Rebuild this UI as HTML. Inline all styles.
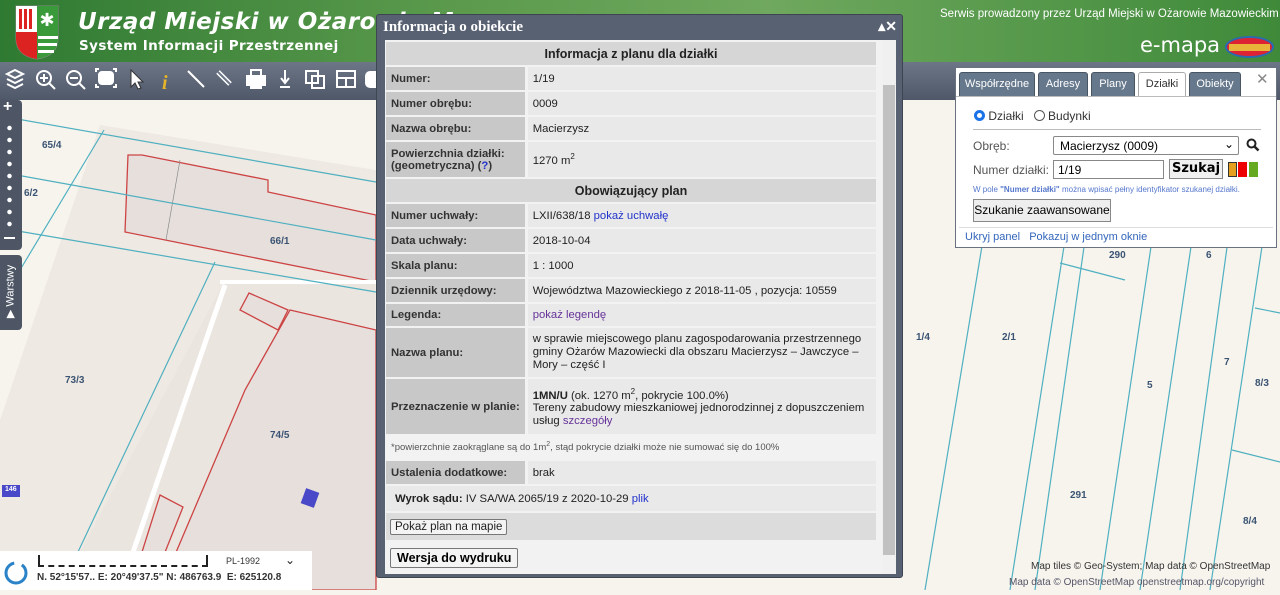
<!DOCTYPE html>
<html><head><meta charset="utf-8"><style>
*{box-sizing:border-box;margin:0;padding:0}
body{width:1280px;height:590px;overflow:hidden;position:relative;font-family:"Liberation Sans",sans-serif;background:#f7f4ee}
.hdr{position:absolute;left:0;top:0;width:1280px;height:62px;background:linear-gradient(90deg,#2f7a32 0%,#5b9a4d 35%,#6fa85e 60%,#3f8a3a 100%)}
.tb{position:absolute;left:0;top:62px;width:1280px;height:38px;background:linear-gradient(#6d7686,#4f5868)}
.map{position:absolute;left:0;top:100px;width:1280px;height:490px}
.lbl{position:absolute;font:bold 10px "Liberation Sans",sans-serif;color:#3b5473}
.dlg{position:absolute;left:376px;top:14px;width:527px;height:564px;background:#586172;border:1px solid #3d4452;border-radius:3px}
.dlg .ttl{position:absolute;left:6px;top:4px;color:#fff;font:bold 15px "Liberation Serif",serif}
.inner{position:absolute;left:8px;top:25px;width:511px;height:534px;background:#f2f2f2}
table{position:absolute;left:1px;top:0px;width:490px;border-collapse:separate;border-spacing:0 2px;font-size:11.3px;color:#222}
td{padding:0 5px;vertical-align:middle}
td.l{width:140px;background:#c8c8c8;font-weight:bold;color:#333;border-right:3px solid #f2f2f2;white-space:nowrap}
td.v{background:#e9e9e9}
td.h{background:#d6d6d6;text-align:center;font-weight:bold;font-size:12.5px}
a{color:#2233cc}
.sb{position:absolute;left:497px;top:0;width:14px;height:534px;background:#f0f0f0}
.sb div{position:absolute;left:1px;top:45px;width:12px;height:470px;background:#c1c1c1}
.btn{display:inline-block;border:1px solid #777;background:#f4f4f4;border-radius:2px;padding:1px 4px;font-size:12px}
.pn{position:absolute;left:955px;top:67px;width:322px;height:181px;background:#fff;border:1px solid #6a7282}
.tab{position:absolute;top:4px;height:24px;background:#66788c;color:#fff;font-size:11px;border:1px solid #4a5564;border-bottom:none;border-radius:3px 3px 0 0;text-align:center;line-height:23px}
.pn .t{position:absolute;font-size:12px;color:#333}
</style></head><body>
<div class="hdr">
 <svg style="position:absolute;left:14px;top:4px" width="46" height="56" viewBox="0 0 46 56"><path d="M2 2H44V34Q44 52 23 55Q2 52 2 34Z" fill="#fff" stroke="#888"/><path d="M2 2H23V28H2Z" fill="#fff"/><path d="M5 5h3v20h-3zM10 5h3v20h-3zM15 5h3v20h-3z" fill="#d22"/><path d="M2 28H23V55Q2 52 2 34Z" fill="#d22"/><path d="M23 28H44V34Q44 52 23 55Z" fill="#3a9a3a"/><path d="M24 32h20v3h-20zM24 39h19v3h-19zM24 46h16v3h-16z" fill="#fff"/><path d="M23 2H44V28H23Z" fill="#3a9a3a"/><text x="33" y="22" fill="#fff" font-size="18" text-anchor="middle">✱</text></svg>
 <div style="position:absolute;left:78px;top:9px;color:#fff;font:italic bold 23px 'DejaVu Sans',sans-serif;letter-spacing:.5px;white-space:nowrap">Urząd Miejski w Ożarowie M</div>
 <div style="position:absolute;left:79px;top:38px;color:#fff;font:bold 13.5px 'DejaVu Sans',sans-serif;letter-spacing:.4px">System Informacji Przestrzennej</div>
 <div style="position:absolute;left:940px;top:8px;color:#fff;font-size:11.5px;white-space:nowrap">Serwis prowadzony przez Urząd Miejski w Ożarowie Mazowieckim</div>
 <div style="position:absolute;left:1140px;top:33px;color:#fff;font:21px 'DejaVu Sans',sans-serif">e-mapa</div>
 <div style="position:absolute;left:1225px;top:36px;width:49px;height:22px;border-radius:50%;background:#d23;border:2px solid #2a6ab0"><div style="margin:6px 2px;height:7px;background:#e8b43a"></div></div>
</div>
<div class="tb">
 <svg width="380" height="38" viewBox="0 0 380 38" fill="none" stroke="#fff" stroke-width="2">
  <path d="M7 12l8-4 8 4-8 4z M7 17l8 4 8-4 M7 22l8 4 8-4"/>
  <circle cx="44" cy="16" r="7"/><path d="M49 21l6 6M40 16h8M44 12v8"/>
  <circle cx="74" cy="16" r="7"/><path d="M79 21l6 6M70 16h8"/>
  <path d="M96 10v-3h3M113 7h3v3M96 22v3h3M113 25h3v-3"/><rect x="99" y="10" width="14" height="12" rx="3" fill="#fff"/>
  <path d="M131 8l0 17 4-4 3 6 3-1-3-6 5 0z" fill="#fff" stroke="#333" stroke-width="1"/>
  <text x="162" y="27" fill="#e6b42a" stroke="none" font-size="20" font-style="italic" font-weight="bold" font-family="Liberation Serif">i</text>
  <path d="M188 9l16 16"/><path d="M218 10l12 12" stroke-width="5"/><path d="M218 10l12 12" stroke="#6d7686" stroke-width="2"/>
  <rect x="247" y="14" width="18" height="9" fill="#fff"/><rect x="251" y="8" width="10" height="6"/><rect x="251" y="20" width="10" height="6" fill="#fff"/>
  <path d="M285 8v12M281 16l4 5 4-5M280 25h10"/>
  <rect x="306" y="9" width="12" height="12"/><rect x="312" y="14" width="12" height="12"/>
  <rect x="337" y="9" width="18" height="16"/><path d="M337 16h18M346 16v9"/>
  <rect x="366" y="10" width="14" height="15" rx="4" fill="#fff"/>
 </svg>
</div>
<div class="map">
 <svg width="1280" height="490" viewBox="0 100 1280 490">
  <path d="M100 125L376 170L376 590L0 590L0 420Z" fill="#efe9e3"/>
  <path d="M128 155L142 155L268 180L268 192L376 215L376 282L125 232Z" fill="#e6dfdc" stroke="#c44" stroke-width="1.3"/>
  <path d="M180 160L166 240" stroke="#888" stroke-width=".7"/>
  <path d="M225 280L375 280L375 570L150 590L60 590Z" fill="#ebe5df"/>
  <path d="M220 282L376 282" stroke="#fff" stroke-width="4"/>
  <path d="M225 285L120 590" stroke="#fff" stroke-width="5"/>
  <path d="M290 310L376 330L376 590L160 590L245 390Z" fill="#e6dfdc" stroke="#c44" stroke-width="1.3"/>
  <path d="M249 293L288 310L278 330L240 310Z" fill="#e6dfdc" stroke="#c44" stroke-width="1.3"/>
  <path d="M160 495L183 507L150 590L130 590Z" fill="#e6dfdc" stroke="#c44" stroke-width="1.3"/>
  <g stroke="#4fb0c0" stroke-width="1.2" fill="none">
   <path d="M0 116L376 182M0 172L376 240M0 228L376 292M104 130L20 270M215 262L60 590"/>
   <path d="M983 240L925 590M1065 240L1010 590M1085 240L1035 590M1152 240L1100 590M1192 240L1140 590M1228 240L1180 590M1263 240L1210 590"/>
   <path d="M1060 263L1125 280M1255 308L1280 313M1232 450L1280 462"/>
  </g>
  <rect x="303" y="490" width="14" height="16" fill="#4848c8" transform="rotate(20 310 498)"/>
  <rect x="2" y="485" width="18" height="12" fill="#4848c8"/>
 </svg>
 <div class="lbl" style="left:42px;top:40px">65/4</div><div class="lbl" style="left:24px;top:88px">6/2</div>
 <div class="lbl" style="left:270px;top:136px">66/1</div><div class="lbl" style="left:65px;top:275px">73/3</div>
 <div class="lbl" style="left:270px;top:330px">74/5</div><div class="lbl" style="left:5px;top:386px;color:#fff;font-size:7px">146</div>
 <div class="lbl" style="left:916px;top:232px">1/4</div><div class="lbl" style="left:1002px;top:232px">2/1</div>
 <div class="lbl" style="left:1109px;top:150px">290</div><div class="lbl" style="left:1206px;top:150px">6</div>
 <div class="lbl" style="left:1147px;top:280px">5</div><div class="lbl" style="left:1224px;top:257px">7</div>
 <div class="lbl" style="left:1255px;top:278px">8/3</div><div class="lbl" style="left:1070px;top:390px">291</div>
 <div class="lbl" style="left:1243px;top:416px">8/4</div>
 <div style="position:absolute;left:1031px;top:461px;font-size:10px;color:#333;white-space:nowrap">Map tiles © Geo-System; Map data © OpenStreetMap</div>
 <div style="position:absolute;left:1009px;top:477px;font-size:10px;color:#556;white-space:nowrap">Map data © OpenStreetMap openstreetmap.org/copyright</div>
 <div style="position:absolute;left:0;top:451px;width:312px;height:39px;background:#fff"></div>
 <svg style="position:absolute;left:3px;top:460px" width="26" height="26"><circle cx="13" cy="13" r="10" fill="none" stroke="#2a82c8" stroke-width="3" stroke-dasharray="45 8"/></svg>
 <div style="position:absolute;left:38px;top:455px;width:170px;height:12px;border-left:2px solid #222;border-right:2px solid #222;border-bottom:2px dashed #222"></div>
 <div style="position:absolute;left:226px;top:456px;font-size:9px;color:#333">PL-1992</div>
 <div style="position:absolute;left:285px;top:453px;font-size:12px;color:#222">⌄</div>
 <div style="position:absolute;left:37px;top:472px;font:bold 10px 'Liberation Sans';color:#333;white-space:nowrap">N. 52°15'57.. E: 20°49'37.5" N: 486763.9 &nbsp;E: 625120.8</div>
 <div style="position:absolute;left:0;top:0;width:22px;height:150px;background:#4e5666;border-radius:0 4px 4px 0"></div>
 <div style="position:absolute;left:3px;top:-2px;color:#fff;font:bold 16px sans-serif">+</div>
 <div style="position:absolute;left:7px;top:22px;width:5px;height:110px;background:radial-gradient(circle,#fff 2px,transparent 2.5px) 0 0/5px 12px"></div>
 <div style="position:absolute;left:4px;top:137px;width:11px;height:2px;background:#fff"></div>
 <div style="position:absolute;left:0;top:155px;width:22px;height:75px;background:#4e5666;border-radius:0 4px 4px 0"></div>
 <div style="position:absolute;left:-20px;top:185px;transform:rotate(-90deg);color:#fff;font-size:11px;width:60px;text-align:center">▶ Warstwy</div>
</div>
<div class="dlg">
 <div class="ttl">Informacja o obiekcie</div>
 <div style="position:absolute;right:5px;top:3px;color:#fff;font:bold 14px sans-serif">▴✕</div>
 <div class="inner">
  <table>
   <tr style="height:23px"><td class="h" colspan="2">Informacja z planu dla działki</td></tr>
   <tr style="height:23px"><td class="l">Numer:</td><td class="v">1/19</td></tr>
   <tr style="height:23px"><td class="l">Numer obrębu:</td><td class="v">0009</td></tr>
   <tr style="height:23px"><td class="l">Nazwa obrębu:</td><td class="v">Macierzysz</td></tr>
   <tr style="height:35px"><td class="l">Powierzchnia działki:<br>(geometryczna) (<a>?</a>)</td><td class="v">1270 m<sup style="font-size:8px">2</sup></td></tr>
   <tr style="height:23px"><td class="h" colspan="2">Obowiązujący plan</td></tr>
   <tr style="height:23px"><td class="l">Numer uchwały:</td><td class="v">LXII/638/18 <a>pokaż uchwałę</a></td></tr>
   <tr style="height:23px"><td class="l">Data uchwały:</td><td class="v">2018-10-04</td></tr>
   <tr style="height:23px"><td class="l">Skala planu:</td><td class="v">1 : 1000</td></tr>
   <tr style="height:23px"><td class="l">Dziennik urzędowy:</td><td class="v">Województwa Mazowieckiego z 2018-11-05 , pozycja: 10559</td></tr>
   <tr style="height:22px"><td class="l">Legenda:</td><td class="v"><a style="color:#639">pokaż legendę</a></td></tr>
   <tr style="height:49px"><td class="l">Nazwa planu:</td><td class="v" style="line-height:13px">w sprawie miejscowego planu zagospodarowania przestrzennego gminy Ożarów Mazowiecki dla obszaru Macierzysz – Jawczyce – Mory – część I</td></tr>
   <tr style="height:55px"><td class="l">Przeznaczenie w planie:</td><td class="v" style="line-height:13px"><b>1MN/U</b> (ok. 1270 m<sup style="font-size:8px">2</sup>, pokrycie 100.0%)<br>Tereny zabudowy mieszkaniowej jednorodzinnej z dopuszczeniem usług <a style="color:#639">szczegóły</a></td></tr>
   <tr style="height:23px"><td colspan="2" style="font-size:9.5px;color:#555;background:#f2f2f2">*powierzchnie zaokrąglane są do 1m<sup style="font-size:7px">2</sup>, stąd pokrycie działki może nie sumować się do 100%</td></tr>
   <tr style="height:23px"><td class="l">Ustalenia dodatkowe:</td><td class="v">brak</td></tr>
   <tr style="height:25px"><td class="v" colspan="2" style="padding-left:9px"><b>Wyrok sądu:</b> IV SA/WA 2065/19 z 2020-10-29 <a>plik</a></td></tr>
   <tr style="height:27px"><td colspan="2" style="background:#dcdcdc;padding-left:4px"><span class="btn" style="font-size:11.5px">Pokaż plan na mapie</span></td></tr>
  </table>
  <span class="btn" style="position:absolute;left:5px;top:508px;font-weight:bold;font-size:12.5px;padding:2px 6px">Wersja do wydruku</span>
  <div class="sb"><div></div></div>
 </div>
</div>
<div class="pn">
 <div class="tab" style="left:3px;width:76px">Współrzędne</div>
 <div class="tab" style="left:82px;width:50px">Adresy</div>
 <div class="tab" style="left:135px;width:44px">Plany</div>
 <div class="tab" style="left:182px;width:48px;background:#fff;color:#333;border-color:#aaa">Działki</div>
 <div class="tab" style="left:233px;width:52px">Obiekty</div>
 <div style="position:absolute;left:300px;top:2px;color:#888;font-size:15px">✕</div>
 <div style="position:absolute;left:0;top:28px;width:320px;height:1px;background:#bbb"></div>
 <div class="t" style="left:18px;top:41px"><span style="display:inline-block;width:11px;height:11px;border-radius:50%;border:3px solid #1a73e8;vertical-align:-1px"></span> Działki &nbsp;&nbsp;<span style="display:inline-block;width:11px;height:11px;border-radius:50%;border:1px solid #555;vertical-align:-1px"></span> Budynki</div>
 <div style="position:absolute;left:17px;top:61px;width:288px;height:1px;background:#bbb"></div>
 <div class="t" style="left:17px;top:71px;color:#555">Obręb:</div>
 <div style="position:absolute;left:97px;top:68px;width:186px;height:19px;border:1px solid #888;border-radius:2px;font-size:12px;padding:2px 6px">Macierzysz (0009)<span style="position:absolute;right:4px;top:0">⌄</span></div>
 <svg style="position:absolute;left:290px;top:70px" width="14" height="14"><circle cx="5.5" cy="5.5" r="4" fill="none" stroke="#222" stroke-width="2"/><path d="M8.5 8.5l4 4" stroke="#222" stroke-width="2.5"/></svg>
 <div class="t" style="left:17px;top:95px;color:#555">Numer działki:</div>
 <div style="position:absolute;left:97px;top:92px;width:111px;height:19px;border:1px solid #888;font-size:12px;padding:2px 4px">1/19</div>
 <div style="position:absolute;left:213px;top:91px;width:54px;height:20px;border:1px solid #888;background:#f0f0f0;font:bold 13px 'DejaVu Sans';text-align:center;line-height:18px">Szukaj</div>
 <div style="position:absolute;left:272px;top:94px;width:9px;height:15px;background:#e6a020;border:1px solid #333"></div>
 <div style="position:absolute;left:282px;top:94px;width:9px;height:15px;background:#e00"></div>
 <div style="position:absolute;left:293px;top:94px;width:9px;height:15px;background:#6a2"></div>
 <div style="position:absolute;left:17px;top:117px;font-size:8px;color:#5577cc;white-space:nowrap">W pole <b>"Numer działki"</b> można wpisać pełny identyfikator szukanej działki.</div>
 <div style="position:absolute;left:17px;top:131px;width:138px;height:23px;border:1px solid #888;background:#eee;font-size:12px;line-height:21px;text-align:center">Szukanie zaawansowane</div>
 <div style="position:absolute;left:3px;top:159px;width:314px;height:1px;background:#ddd"></div>
 <div style="position:absolute;left:9px;top:163px;font-size:11px;color:#3366bb">Ukryj panel &nbsp;&nbsp;Pokazuj w jednym oknie</div>
</div>
</body></html>
